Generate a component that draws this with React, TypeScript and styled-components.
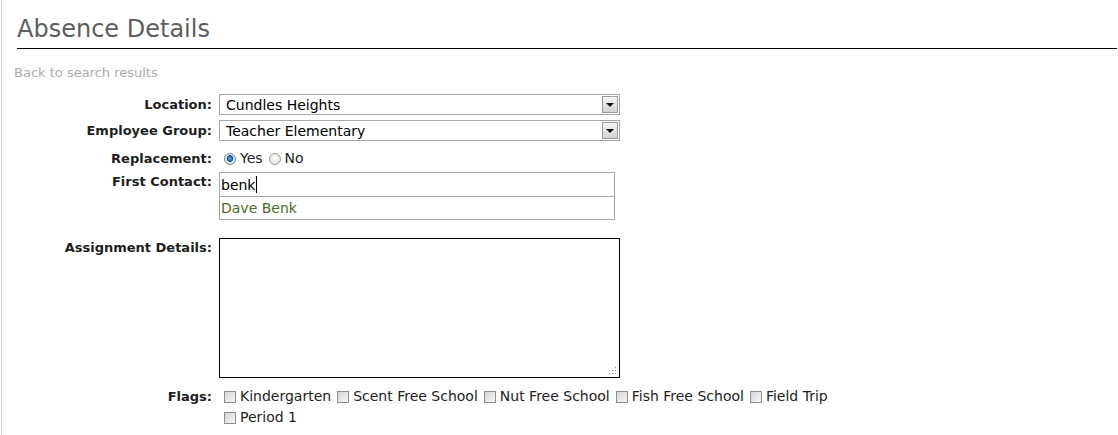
import styled, { createGlobalStyle } from 'styled-components'

const GlobalStyle = createGlobalStyle`
  html, body {
    margin: 0;
    padding: 0;
    background: #ffffff;
  }
  body {
    font-family: "DejaVu Sans", Verdana, sans-serif;
    color: #222;
  }
`

const Page = styled.div`
  margin-left: 1px;
  border-left: 1px solid #d6d6d6;
  min-height: 435px;
  box-sizing: border-box;
`

const Title = styled.h1`
  margin: 0 1px 0 15px;
  padding: 14px 0 4px;
  font-size: 24px;
  line-height: 30px;
  font-weight: normal;
  color: #5e5e5e;
  border-bottom: 1px solid #000;
`

const BackLink = styled.a`
  display: block;
  margin: 16px 0 0 12px;
  font-size: 13px;
  line-height: 16px;
  color: #ababab;
  text-decoration: none;
`

const Form = styled.form`
  margin: 0;
`

const Row = styled.div<{ $top: number }>`
  display: grid;
  grid-template-columns: 210px auto;
  column-gap: 7px;
  align-items: center;
  margin-top: ${p => p.$top}px;
`

const Label = styled.label<{ $pad?: number; $lh?: number }>`
  align-self: ${p => (p.$pad !== undefined ? 'start' : 'center')};
  padding-top: ${p => p.$pad ?? 0}px;
  text-align: right;
  font-size: 13px;
  line-height: ${p => p.$lh ?? 16}px;
  font-weight: bold;
  color: #1e1e1e;
`

const Select = styled.div`
  display: flex;
  align-items: center;
  justify-content: space-between;
  width: 401px;
  height: 21px;
  box-sizing: border-box;
  border: 1px solid #a6a6a6;
  padding-left: 6px;
  font-size: 14px;
  color: #000;
`

const SelectArrow = styled.span`
  display: flex;
  align-items: center;
  justify-content: center;
  width: 16px;
  height: 17px;
  box-sizing: border-box;
  margin-right: 1px;
  border: 1px solid #9a9a9a;
  background: linear-gradient(#f6f6f6, #d2d2d2);

  &::after {
    content: '';
    width: 0;
    height: 0;
    border-left: 4px solid transparent;
    border-right: 4px solid transparent;
    border-top: 4px solid #111;
  }
`

const Options = styled.div<{ $width?: number }>`
  display: flex;
  flex-wrap: wrap;
  width: ${p => (p.$width ? `${p.$width}px` : 'auto')};
`

const Option = styled.label`
  display: inline-flex;
  align-items: center;
  margin-right: 1px;
  font-size: 14px;
  line-height: 21px;
  color: #222;
  white-space: nowrap;
`

const Radio = styled.input.attrs({ type: 'radio' })`
  appearance: none;
  width: 12px;
  height: 12px;
  margin: 0 4px 0 5px;
  border-radius: 50%;
  border: 1px solid #9a9a9a;
  box-sizing: border-box;
  background: radial-gradient(circle at 50% 40%, #ffffff, #d8d8d8);

  &:checked {
    border-color: #7a8a99;
    background: radial-gradient(circle at 50% 45%, #6fb1e6 0, #1d6fb8 2px, #104a82 3px, #e8eef3 3.6px, #cfd6dc 100%);
  }
`

const Checkbox = styled.input.attrs({ type: 'checkbox' })`
  appearance: none;
  width: 12px;
  height: 12px;
  margin: 0 4px 0 5px;
  box-sizing: border-box;
  border: 1px solid #8e8e8e;
  background: linear-gradient(135deg, #d6d6d6, #f6f6f6);
`

const ContactField = styled.div`
  width: 396px;
`

const ContactInput = styled.div`
  display: flex;
  align-items: center;
  height: 25px;
  box-sizing: border-box;
  border: 1px solid #a6a6a6;
  padding-left: 1px;
  font-size: 14px;
  color: #000;
`

const Caret = styled.span`
  width: 1px;
  height: 17px;
  margin-left: 1px;
  background: #000;
`

const Suggestion = styled.div`
  display: flex;
  align-items: center;
  height: 23px;
  box-sizing: border-box;
  border: 1px solid #a6a6a6;
  border-top: none;
  padding-left: 1px;
  font-size: 14px;
  color: #4d6a28;
`

const TextAreaWrap = styled.div`
  position: relative;
  width: 401px;
  height: 140px;
`

const TextArea = styled.textarea`
  display: block;
  width: 100%;
  height: 100%;
  box-sizing: border-box;
  border: 1px solid #000;
  resize: none;
  outline: none;
  font-family: inherit;
  font-size: 14px;
`

const Grip = styled.svg`
  position: absolute;
  right: 3px;
  bottom: 3px;
`

function ResizeGrip() {
  const dots = [
    [8, 0], [8, 3], [5, 3], [8, 6], [5, 6], [2, 6],
  ]
  return (
    <Grip width="10" height="8" viewBox="0 0 10 8">
      {dots.map(([x, y], i) => (
        <rect key={i} x={x} y={y} width="1.2" height="1.2" fill="#9a9a9a" />
      ))}
    </Grip>
  )
}

const flags = [
  'Kindergarten',
  'Scent Free School',
  'Nut Free School',
  'Fish Free School',
  'Field Trip',
  'Period 1',
]

export default function App() {
  return (
    <>
      <GlobalStyle />
      <Page>
        <Title>Absence Details</Title>
        <BackLink href="#">Back to search results</BackLink>
        <Form onSubmit={e => e.preventDefault()}>
          <Row $top={13}>
            <Label>Location:</Label>
            <Select>
              <span>Cundles Heights</span>
              <SelectArrow />
            </Select>
          </Row>
          <Row $top={5}>
            <Label>Employee Group:</Label>
            <Select>
              <span>Teacher Elementary</span>
              <SelectArrow />
            </Select>
          </Row>
          <Row $top={7}>
            <Label>Replacement:</Label>
            <Options>
              <Option>
                <Radio name="replacement" defaultChecked />
                Yes
              </Option>
              <Option>
                <Radio name="replacement" />
                No
              </Option>
            </Options>
          </Row>
          <Row $top={3}>
            <Label $pad={2}>First Contact:</Label>
            <ContactField>
              <ContactInput>
                benk
                <Caret />
              </ContactInput>
              <Suggestion>Dave Benk</Suggestion>
            </ContactField>
          </Row>
          <Row $top={18}>
            <Label $pad={2}>Assignment Details:</Label>
            <TextAreaWrap>
              <TextArea />
              <ResizeGrip />
            </TextAreaWrap>
          </Row>
          <Row $top={8}>
            <Label $pad={0} $lh={21}>Flags:</Label>
            <Options $width={640}>
              {flags.map(f => (
                <Option key={f}>
                  <Checkbox />
                  {f}
                </Option>
              ))}
            </Options>
          </Row>
        </Form>
      </Page>
    </>
  )
}
